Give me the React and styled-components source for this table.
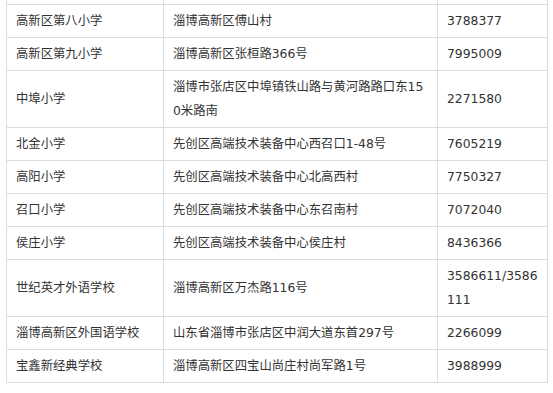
import styled, { createGlobalStyle } from "styled-components"

const Global = createGlobalStyle`
    body{
        margin: 0;
        background: #fff;
    }
`

const escolas = [
    ["高新区第八小学", "淄博高新区傅山村", "3788377"],
    ["高新区第九小学", "淄博高新区张桓路366号", "7995009"],
    ["中埠小学", "淄博市张店区中埠镇铁山路与黄河路路口东150米路南", "2271580"],
    ["北金小学", "先创区高端技术装备中心西召口1-48号", "7605219"],
    ["高阳小学", "先创区高端技术装备中心北高西村", "7750327"],
    ["召口小学", "先创区高端技术装备中心东召南村", "7072040"],
    ["侯庄小学", "先创区高端技术装备中心侯庄村", "8436366"],
    ["世纪英才外语学校", "淄博高新区万杰路116号", "3586611/3586111"],
    ["淄博高新区外国语学校", "山东省淄博市张店区中润大道东首297号", "2266099"],
    ["宝鑫新经典学校", "淄博高新区四宝山尚庄村尚军路1号", "3988999"],
]

// largura útil do texto em cada coluna
const larguras = [139, 256, 92]

const App = () => {
    return (
        <>
            <Global />
            <Pagina>
                <Tabela>
                    <colgroup>
                        <col style={{ width: 157 }} />
                        <col style={{ width: 274 }} />
                        <col style={{ width: 110 }} />
                    </colgroup>
                    <tbody>
                        {/* linha anterior, cortada no topo */}
                        <tr>
                            <Celula $cortada></Celula>
                            <Celula $cortada></Celula>
                            <Celula $cortada></Celula>
                        </tr>
                        {escolas.map((escola, index) => (
                            <tr key={index}>
                                {escola.map((texto, i) => (
                                    <Celula key={i}>
                                        <Texto $largura={larguras[i]}>{texto}</Texto>
                                    </Celula>
                                ))}
                            </tr>
                        ))}
                    </tbody>
                </Tabela>
            </Pagina>
        </>
    )
}

const Pagina = styled.div`
    padding: 0 0 0 6px;
    height: 393px;
    overflow: hidden;
`

const Tabela = styled.table`
    border-collapse: collapse;
    table-layout: fixed;
    width: 541px;
    font-family: "DejaVu Sans", "Noto Sans CJK SC", sans-serif;
    font-size: 12.35px;
    color: #333;
`

const Celula = styled.td`
    border: 1px solid #dcdcdc;
    border-top: ${(props) => props.$cortada ? "none" : "1px solid #dcdcdc"};
    padding: ${(props) => props.$cortada ? "0 9px" : "4px 8px 4px 9px"};
    height: ${(props) => props.$cortada ? "4px" : "auto"};
    line-height: 24px;
    vertical-align: middle;
`

const Texto = styled.div`
    max-width: ${(props) => props.$largura}px;
    word-break: break-all;
`

export default App
